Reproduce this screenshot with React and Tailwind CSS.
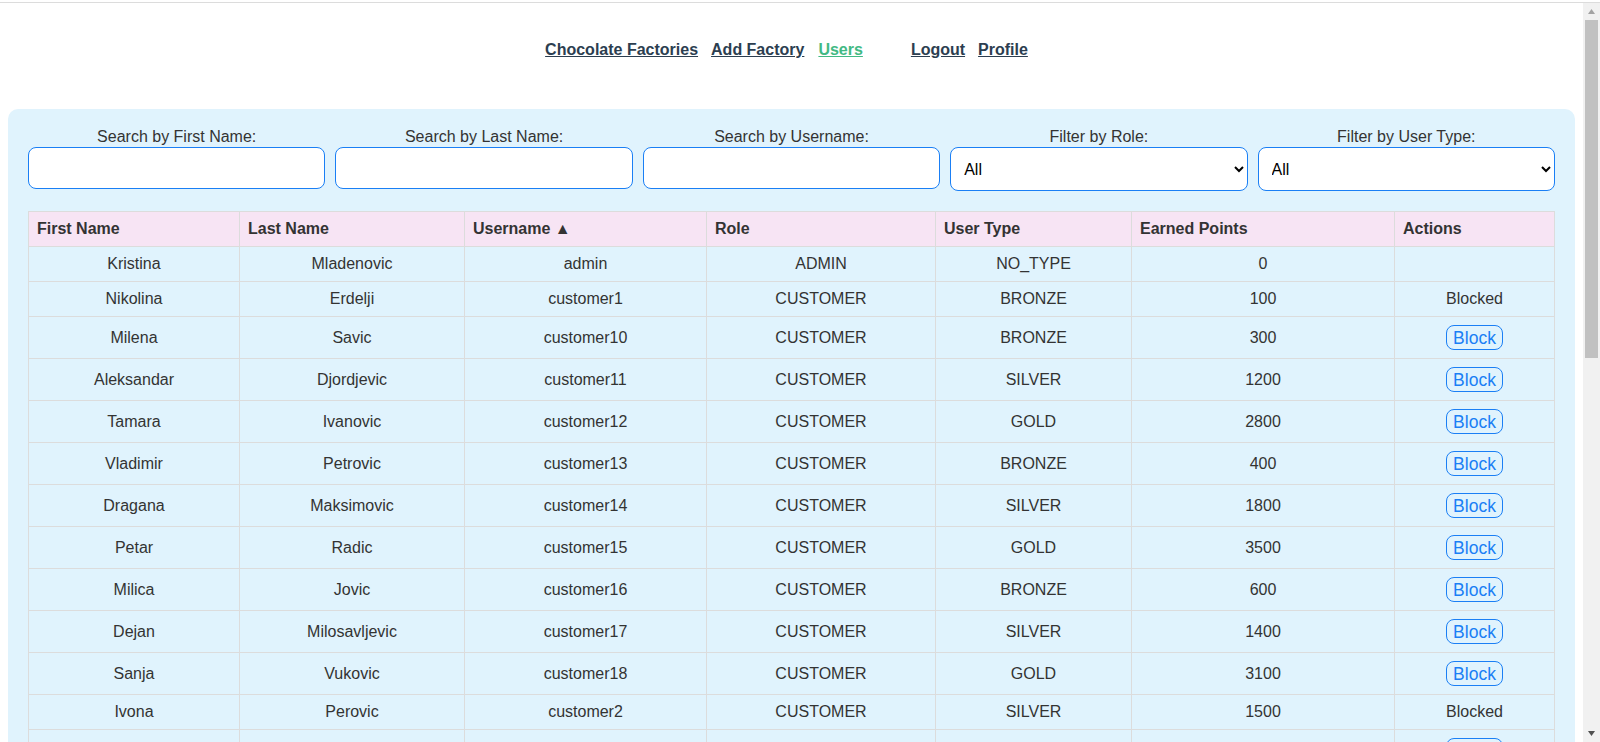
import React from "react";

const rows = [
  ["Kristina", "Mladenovic", "admin", "ADMIN", "NO_TYPE", "0", "none"],
  ["Nikolina", "Erdelji", "customer1", "CUSTOMER", "BRONZE", "100", "blocked"],
  ["Milena", "Savic", "customer10", "CUSTOMER", "BRONZE", "300", "block"],
  ["Aleksandar", "Djordjevic", "customer11", "CUSTOMER", "SILVER", "1200", "block"],
  ["Tamara", "Ivanovic", "customer12", "CUSTOMER", "GOLD", "2800", "block"],
  ["Vladimir", "Petrovic", "customer13", "CUSTOMER", "BRONZE", "400", "block"],
  ["Dragana", "Maksimovic", "customer14", "CUSTOMER", "SILVER", "1800", "block"],
  ["Petar", "Radic", "customer15", "CUSTOMER", "GOLD", "3500", "block"],
  ["Milica", "Jovic", "customer16", "CUSTOMER", "BRONZE", "600", "block"],
  ["Dejan", "Milosavljevic", "customer17", "CUSTOMER", "SILVER", "1400", "block"],
  ["Sanja", "Vukovic", "customer18", "CUSTOMER", "GOLD", "3100", "block"],
  ["Ivona", "Perovic", "customer2", "CUSTOMER", "SILVER", "1500", "blocked"],
  ["Marko", "Nikolic", "customer3", "CUSTOMER", "BRONZE", "200", "block"],
  ["Jelena", "Stojanovic", "customer4", "CUSTOMER", "SILVER", "1100", "block"],
  ["Stefan", "Kovacevic", "customer5", "CUSTOMER", "GOLD", "2500", "block"],
];

const headers = ["First Name", "Last Name", "Username \u25B2", "Role", "User Type", "Earned Points", "Actions"];

function Field({ label, children }) {
  return (
    <div className="flex flex-col items-stretch">
      <label className="text-center text-[16px] leading-[18px] text-[#333] mb-px">{label}</label>
      {children}
    </div>
  );
}

function Scrollbar() {
  return (
    <div className="sticky top-0 flex h-[739px] w-[17px] shrink-0 flex-col bg-[#f1f1f1]">
      <div className="flex h-[17px] items-center justify-center">
        <svg width="7" height="5" viewBox="0 0 7 5">
          <polygon points="3.5,0 7,5 0,5" fill="#a3a3a3" />
        </svg>
      </div>
      <div className="mx-[2px] h-[338px] bg-[#c1c1c1]" />
      <div className="flex-1" />
      <div className="flex h-[17px] items-center justify-center">
        <svg width="7" height="5" viewBox="0 0 7 5">
          <polygon points="0,0 7,0 3.5,5" fill="#505050" />
        </svg>
      </div>
    </div>
  );
}

export default function App() {
  return (
    <div className="min-h-screen bg-white text-[#333]" style={{ fontFamily: '"Liberation Sans", Arial, sans-serif' }}>
      <div className="mt-[2px] h-px bg-[#dcdcdc]" />
      <div className="flex items-start">
        <div className="min-w-0 flex-1">
          <header className="h-[106px] pt-[38px]">
            <nav className="flex justify-center pr-[10px] text-[16px] leading-[18px] font-bold">
              <a href="#" className="text-[#2c3e50] underline">Chocolate Factories</a>
              <a href="#" className="ml-[13px] text-[#2c3e50] underline">Add Factory</a>
              <a href="#" className="ml-[14px] text-[#42b983] underline">Users</a>
              <a href="#" className="ml-[48px] text-[#2c3e50] underline">Logout</a>
              <a href="#" className="ml-[13px] text-[#2c3e50] underline">Profile</a>
            </nav>
          </header>

          <main className="mx-2 rounded-[10px] bg-[#e0f3fd] px-5 pb-5 pt-[19px]">
            <div className="mb-5 grid grid-cols-5 items-start gap-[10px]">
              <Field label="Search by First Name:">
                <input className="h-[42px] rounded-[8px] border border-[#1a7ff5] bg-white px-3 text-[16px]" />
              </Field>
              <Field label="Search by Last Name:">
                <input className="h-[42px] rounded-[8px] border border-[#1a7ff5] bg-white px-3 text-[16px]" />
              </Field>
              <Field label="Search by Username:">
                <input className="h-[42px] rounded-[8px] border border-[#1a7ff5] bg-white px-3 text-[16px]" />
              </Field>
              <Field label="Filter by Role:">
                <select className="h-[44px] rounded-[8px] border border-[#1a7ff5] bg-white pl-[9px] pr-2 text-[16px] text-black">
                  <option>All</option>
                </select>
              </Field>
              <Field label="Filter by User Type:">
                <select className="h-[44px] rounded-[8px] border border-[#1a7ff5] bg-white pl-[9px] pr-2 text-[16px] text-black">
                  <option>All</option>
                </select>
              </Field>
            </div>

            <table className="w-full table-fixed border-collapse text-[16px] leading-[18px]">
              <colgroup>
                <col className="w-[211px]" />
                <col className="w-[225px]" />
                <col className="w-[242px]" />
                <col className="w-[229px]" />
                <col className="w-[196px]" />
                <col className="w-[263px]" />
                <col className="w-[160px]" />
              </colgroup>
              <thead>
                <tr className="bg-[#f7e4f4]">
                  {headers.map((h) => (
                    <th key={h} className="border border-[#dcdcdc] px-2 py-[8px] text-left font-bold text-[#333]">
                      {h}
                    </th>
                  ))}
                </tr>
              </thead>
              <tbody>
                {rows.map((r) => (
                  <tr key={r[2]}>
                    {r.slice(0, 6).map((c, i) => (
                      <td key={i} className="border border-[#dcdcdc] px-2 py-[8px] text-center text-[#333]">
                        {c}
                      </td>
                    ))}
                    <td className="border border-[#dcdcdc] px-2 py-[8px] text-center text-[#333]">
                      {r[6] === "blocked" && "Blocked"}
                      {r[6] === "block" && (
                        <button className="h-[25px] rounded-[8px] border border-[#1a7ff5] px-[6px] align-middle text-[17.5px] leading-[20px] text-[#1a7ff5]">
                          Block
                        </button>
                      )}
                    </td>
                  </tr>
                ))}
              </tbody>
            </table>
          </main>
        </div>
        <Scrollbar />
      </div>
    </div>
  );
}
